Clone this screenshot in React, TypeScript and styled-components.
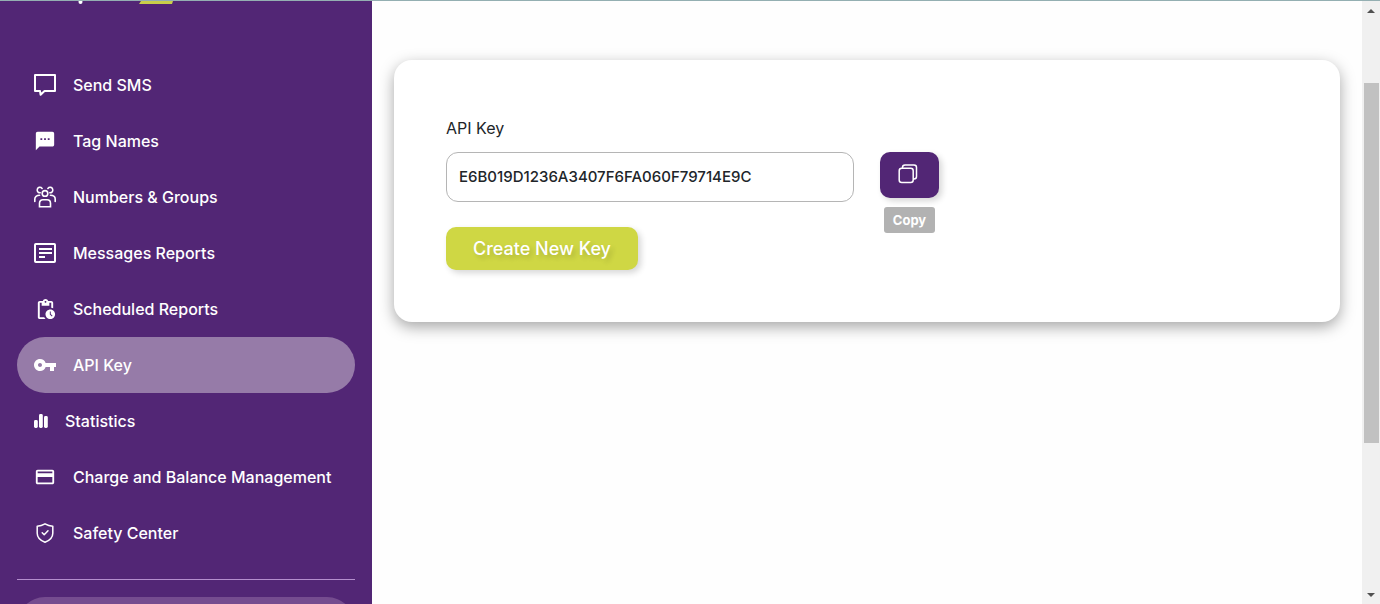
import React, { useState } from "react";
import styled, { createGlobalStyle, css } from "styled-components";
import { MdCreditCard, MdPendingActions, MdSms, MdVpnKey } from "react-icons/md";

const GlobalStyle = createGlobalStyle`
  *, *::before, *::after { box-sizing: border-box; }
  body {
    margin: 0;
    background: #fefefe;
    color: #212529;
    font-family: Inter, "Liberation Sans", sans-serif;
    overflow: hidden;
  }
  button, input { font: inherit; }
`;

const Page = styled.div`
  display: flex;
  height: 100vh;
  overflow: hidden;
  border-top: 1px solid #94afb2;
`;

const Sidebar = styled.aside`
  flex: 0 0 372px;
  background: #522675;
  overflow: hidden;
`;

const Brand = styled.div`
  height: 56px;

  svg { display: block; }
`;

const NavList = styled.ul`
  list-style: none;
  margin: 0;
  padding: 0 17px;
`;

const NavLink = styled.a<{ $active?: boolean }>`
  display: flex;
  align-items: center;
  gap: 17px;
  height: 56px;
  padding: 0 17px;
  border-radius: 28px;
  color: #fff;
  font-size: 16px;
  font-weight: 500;
  white-space: nowrap;
  text-decoration: none;
  ${(p) => p.$active && css`background: #967ba8;`}
`;

const IconBox = styled.span<{ $width: number }>`
  display: flex;
  justify-content: center;
  flex: 0 0 ${(p) => p.$width}px;
  min-width: 0;

  svg { flex-shrink: 0; }
`;

const Divider = styled.hr`
  margin: 18px 17px 17px;
  border: 0;
  border-top: 1px solid #b48fcd;
`;

const Account = styled.div`
  height: 56px;
  margin: 0 17px;
  border-radius: 28px;
  background: #754c8f;
`;

const Main = styled.main`
  flex: 1;
  min-width: 0;
  padding: 59px 22px;
`;

const Card = styled.section`
  padding: 56px 52px 52px;
  border-radius: 18px;
  background: #fff;
  box-shadow: 0 5px 15px rgba(0, 0, 0, 0.35);
`;

const Label = styled.label`
  display: block;
  margin-bottom: 12px;
  font-size: 16px;
  line-height: 24px;
`;

const KeyRow = styled.div`
  display: flex;
  align-items: flex-start;
  gap: 26px;
`;

const KeyForm = styled.div`
  flex: 0 1 408px;
  min-width: 0;
`;

const KeyInput = styled.input`
  display: block;
  width: 100%;
  height: 50px;
  padding: 0 12px 2px;
  border: 1px solid #b5b5b5;
  border-radius: 12px;
  background: #fff;
  color: #212529;
  font-size: 15px;
  font-weight: 500;
  outline: none;
`;

const CreateButton = styled.button`
  height: 43px;
  width: 192px;
  margin-top: 25px;
  padding: 0;
  border: 0;
  border-radius: 10px;
  background: #cfd744;
  color: #fff;
  font-size: 18px;
  font-weight: 500;
  text-shadow: 3px 3px 5px rgba(0, 0, 0, 0.16);
  box-shadow: 3px 3px 6px rgba(0, 0, 0, 0.16);
  cursor: pointer;
`;

const CopyGroup = styled.div`
  display: flex;
  flex-direction: column;
  align-items: center;
  gap: 9px;
`;

const CopyButton = styled.button`
  display: flex;
  align-items: center;
  justify-content: center;
  width: 59px;
  height: 46px;
  padding: 0 4px 2px 0;
  border: 0;
  border-radius: 10px;
  background: #522675;
  color: #fff;
  box-shadow: 3px 3px 6px rgba(0, 0, 0, 0.16);
  cursor: pointer;
`;

const Hint = styled.span`
  padding: 0 9px;
  border-radius: 3px;
  background: #b2b2b2;
  color: #fff;
  font-size: 13px;
  font-weight: 700;
  line-height: 26px;
`;

const ScrollTrack = styled.div`
  display: flex;
  flex-direction: column;
  align-items: center;
  justify-content: space-between;
  flex: 0 0 18px;
  padding: 8px 0 7px;
  background: #f0f0f0;
`;

const ScrollArea = styled.div`
  flex: 1;
  width: 15px;
  padding-top: 70px;
`;

const ScrollThumb = styled.div`
  height: calc(60vh - 2px);
  background: #c1c1c1;
`;

const Arrow = styled.span<{ $down?: boolean }>`
  border: 4px solid transparent;
  ${(p) =>
    p.$down
      ? "border-top-color: #505050; border-bottom: 0;"
      : "border-bottom-color: #505050; border-top: 0;"}
`;

const SpeechIcon = () => (
  <svg width="22" height="22" viewBox="0 0 22 22" fill="none" stroke="currentColor" strokeWidth="2" strokeLinejoin="round">
    <path d="M1 1h20v16H10.500L6.600 20.800l-.6-3.800H1z" />
  </svg>
);

const PeopleIcon = () => (
  <svg width="22" height="22" viewBox="0 0 22 22" fill="none" stroke="currentColor" strokeWidth="1.600" strokeLinecap="round">
    <circle cx="11" cy="7.400" r="2.800" />
    <path d="M5.500 20.800v-3.500c0-2.200 1.400-3.600 3.400-3.600h4.200c2 0 3.400 1.400 3.400 3.600v3.500z" />
    <path d="M8.100 2.400C6.500.4 3.200 1.200 3.200 3.900c0 1.900 1.300 2.900 3 2.800" />
    <path d="M13.900 2.400c1.600-2 4.900-1.200 4.900 1.500 0 1.900-1.300 2.900-3 2.800" />
    <path d="M5.600 9.300C2.600 9.300.8 10.800.8 13v2.400M16.400 9.300c3 0 4.800 1.500 4.800 3.700v2.400" />
  </svg>
);

const ReportIcon = () => (
  <svg width="22" height="20" viewBox="0 0 22 20" fill="none" stroke="currentColor" strokeWidth="2">
    <rect x="1" y="1" width="20" height="18" rx=".8" />
    <path d="M5 6h13M5 10h13M5 14h6" />
  </svg>
);

const StatsIcon = () => (
  <svg width="14" height="14" viewBox="0 0 14 14" fill="currentColor">
    <rect x="0" y="6" width="3.800" height="8" rx="1.400" />
    <rect x="5" y="0" width="3.800" height="14" rx="1.400" />
    <rect x="10" y="2" width="3.800" height="12" rx="1.400" />
  </svg>
);

const ShieldIcon = () => (
  <svg width="18" height="20" viewBox="0 0 18 20" fill="none" stroke="currentColor" strokeWidth="1.500" strokeLinecap="round" strokeLinejoin="round">
    <path d="M9 .8C6.600 2.200 4 3 1.200 3.200v7c0 4.500 3.100 7.200 7.800 9 4.700-1.800 7.800-4.500 7.800-9v-7C14 3 11.400 2.200 9 .8z" />
    <path d="m6.200 9.800 2 2 3.800-4" />
  </svg>
);

const CopyIcon = () => (
  <svg width="20" height="20" viewBox="0 0 20 20" fill="none" stroke="currentColor" strokeWidth="1.500">
    <rect x="1.200" y="4.200" width="14" height="14.200" rx="2.500" />
    <path d="M4.500 4.200V3.500c0-1.500 1-2.500 2.500-2.500h9c1.500 0 2.500 1 2.500 2.500v9c0 1.500-1 2.500-2.500 2.500h-.8" />
  </svg>
);

const items = [
  { label: "Send SMS", icon: <SpeechIcon /> },
  { label: "Tag Names", icon: <MdSms size={22} /> },
  { label: "Numbers & Groups", icon: <PeopleIcon /> },
  { label: "Messages Reports", icon: <ReportIcon /> },
  { label: "Scheduled Reports", icon: <MdPendingActions size={23} /> },
  { label: "API Key", icon: <MdVpnKey size={24} />, active: true },
  { label: "Statistics", icon: <StatsIcon />, compact: true },
  { label: "Charge and Balance Management", icon: <MdCreditCard size={22} /> },
  { label: "Safety Center", icon: <ShieldIcon /> },
];

export default function App() {
  const [apiKey, setApiKey] = useState("E6B019D1236A3407F6FA060F79714E9C");

  return (
    <>
      <GlobalStyle />
      <Page>
        <Sidebar>
          <Brand>
            <svg width="180" height="4" viewBox="0 0 180 4" aria-hidden="true">
              <circle cx="80.500" cy="1" r="2" fill="#fff" />
              <path d="M141 0h32l-1 3h-33z" fill="#c8cf49" />
            </svg>
          </Brand>
          <nav>
            <NavList>
              {items.map((item) => (
                <li key={item.label}>
                  <NavLink
                    href="#"
                    $active={item.active}
                    aria-current={item.active ? "page" : undefined}
                  >
                    <IconBox $width={item.compact ? 14 : 22}>{item.icon}</IconBox>
                    {item.label}
                  </NavLink>
                </li>
              ))}
            </NavList>
          </nav>
          <Divider />
          <Account />
        </Sidebar>
        <Main>
          <Card>
            <Label htmlFor="api-key">API Key</Label>
            <KeyRow>
              <KeyForm>
                <KeyInput id="api-key" value={apiKey} onChange={(e) => setApiKey(e.target.value)} />
                <CreateButton type="button">Create New Key</CreateButton>
              </KeyForm>
              <CopyGroup>
                <CopyButton type="button" aria-label="Copy key">
                  <CopyIcon />
                </CopyButton>
                <Hint>Copy</Hint>
              </CopyGroup>
            </KeyRow>
          </Card>
        </Main>
        <ScrollTrack aria-hidden="true">
          <Arrow />
          <ScrollArea>
            <ScrollThumb />
          </ScrollArea>
          <Arrow $down />
        </ScrollTrack>
      </Page>
    </>
  );
}
